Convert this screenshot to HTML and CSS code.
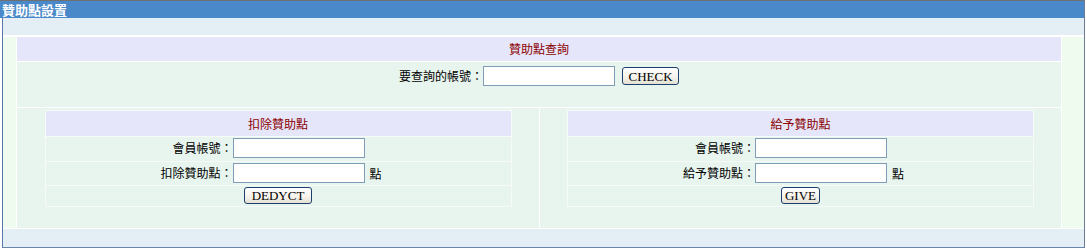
FILE: index.html
```html
<!DOCTYPE html>
<html lang="zh-Hant">
<head>
    <meta charset="UTF-8">
    <title>贊助點設置</title>
    <link rel="stylesheet" href="styles.css">
</head>
<body>

<div class="page">
    <div class="title">贊助點設置</div>

    <div class="frame">
        <div class="frame-top"></div>

        <div class="frame-body">
            <div class="side side-left"></div>

            <div class="main">
                <!-- Query -->
                <div class="head">贊助點查詢</div>
                <div class="query">
                    <label for="q-account">要查詢的帳號：</label>
                    <input type="text" id="q-account" class="field">
                    <button class="btn btn-check">CHECK</button>
                </div>

                <div class="halves">
                    <!-- Deduct points -->
                    <div class="half">
                        <div class="panel">
                            <div class="head panel-head">扣除贊助點</div>
                            <div class="row row-1">
                                <label class="lbl" for="d-account">會員帳號：</label>
                                <input type="text" id="d-account" class="field">
                            </div>
                            <div class="row row-2">
                                <label class="lbl" for="d-points">扣除贊助點：</label>
                                <input type="text" id="d-points" class="field">
                                <span class="unit">點</span>
                            </div>
                            <div class="row row-btn">
                                <button class="btn btn-deduct">DEDYCT</button>
                            </div>
                        </div>
                    </div>

                    <!-- Give points -->
                    <div class="half">
                        <div class="panel">
                            <div class="head panel-head">給予贊助點</div>
                            <div class="row row-1">
                                <label class="lbl" for="g-account">會員帳號：</label>
                                <input type="text" id="g-account" class="field">
                            </div>
                            <div class="row row-2">
                                <label class="lbl" for="g-points">給予贊助點：</label>
                                <input type="text" id="g-points" class="field">
                                <span class="unit">點</span>
                            </div>
                            <div class="row row-btn">
                                <button class="btn btn-give">GIVE</button>
                            </div>
                        </div>
                    </div>
                </div>
            </div>

            <div class="side side-right"></div>
        </div>

        <div class="frame-bottom"></div>
    </div>
</div>

</body>
</html>
```

FILE: styles.css
```css
body {
    margin: 0;
    background-color: #fff;
    font-family: "Noto Sans CJK TC", "Liberation Sans", sans-serif;
    font-size: 12px;
    color: #000;
}
.page {
    width: 1084px;
    border-right: 1px solid #6b7c92;
}
.title {
    height: 17px;
    line-height: 17px;
    border-top: 1px solid #707070;
    background-color: #4a89c9;
    color: #fff;
    font-weight: bold;
    font-size: 13px;
    padding-left: 2px;
}
.frame {
    margin-left: 2px;
    border-left: 1px solid #5878a8;
    border-bottom: 1px solid #6a86ae;
    background-color: #fff;
}
.frame-top {
    height: 17px;
    margin-bottom: 2px;
    background-color: #e4eef5;
}
.frame-bottom {
    height: 18px;
    margin-top: 1px;
    background-color: #e4eef5;
}
.frame-body {
    display: flex;
    gap: 1px;
    height: 191px;
}
.side {
    background-color: #eefbee;
}
.side-left {
    width: 13px;
}
.side-right {
    width: 22px;
}
.main {
    width: 1044px;
    display: flex;
    flex-direction: column;
    gap: 1px;
}
.head {
    height: 24px;
    line-height: 24px;
    text-align: center;
    background-color: #e6e6fa;
    color: #8b0000;
}
.query {
    height: 41px;
    padding-top: 4px;
    display: flex;
    justify-content: center;
    align-items: flex-start;
    background-color: #e7f5ee;
}
.query label {
    line-height: 20px;
}
.field {
    box-sizing: border-box;
    width: 132px;
    height: 20px;
    margin: 0;
    padding: 1px 3px;
    border: 1px solid #7f9db9;
    background-color: #fff;
    font-size: 12px;
}
.btn {
    box-sizing: border-box;
    height: 17px;
    margin: 0;
    padding: 0;
    border: 1px solid #1c3f6e;
    border-radius: 3px;
    background: linear-gradient(#ffffff, #f4f2ea 60%, #e4e0d2);
    font-family: "Liberation Serif", serif;
    font-size: 13px;
    line-height: 15px;
    color: #000;
}
.btn-check {
    width: 57px;
    height: 18px;
    margin-left: 7px;
    margin-top: 1px;
}
.btn-deduct {
    width: 68px;
}
.btn-give {
    width: 39px;
}
.halves {
    height: 120px;
    display: flex;
    gap: 1px;
}
.half {
    flex: 1;
    padding-top: 2px;
    background-color: #e7f5ee;
}
.half:first-child {
    flex: 0 0 522px;
}
.panel {
    width: 465px;
    margin: 0 auto;
    display: flex;
    flex-direction: column;
    gap: 1px;
    border: 1px solid #f6fbf8;
    background-color: #f6fbf8;
}
.panel-head {
    height: 25px;
    line-height: 25px;
}
.row {
    display: flex;
    align-items: flex-start;
    padding-top: 1px;
    background-color: #e7f5ee;
}
.row-1 {
    height: 23px;
}
.row-2 {
    height: 22px;
}
.row-btn {
    height: 19px;
    justify-content: center;
}
.lbl {
    width: 187px;
    line-height: 20px;
    text-align: right;
}
.unit {
    line-height: 22px;
    margin-left: 5px;
}
```
